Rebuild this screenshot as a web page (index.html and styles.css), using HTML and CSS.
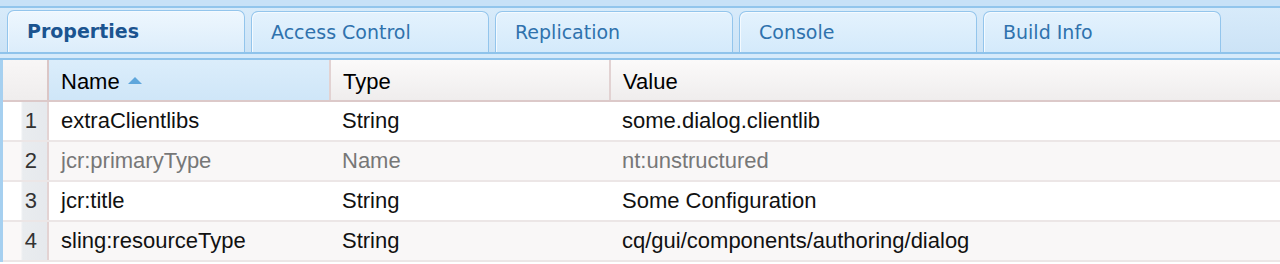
FILE: index.html
```html
<!DOCTYPE html>
<html lang="en">

<head>
    <meta charset="UTF-8">
    <meta name="viewport" content="width=device-width, initial-scale=1.0">
    <title>Properties</title>
    <link rel="stylesheet" href="styles.css">
</head>

<body>

    <div class="panel">

        <div class="tabbar">
            <div class="tab active">Properties</div>
            <div class="tab">Access Control</div>
            <div class="tab">Replication</div>
            <div class="tab">Console</div>
            <div class="tab">Build Info</div>
        </div>
        <div class="tabbar-foot"></div>

        <div class="grid">
            <table>
                <thead>
                    <tr>
                        <th class="num"></th>
                        <th class="col-name sorted">Name <span class="sort-arrow"></span></th>
                        <th class="col-type">Type</th>
                        <th class="col-value">Value</th>
                    </tr>
                </thead>
                <tbody>
                    <tr>
                        <td class="num">1</td>
                        <td>extraClientlibs</td>
                        <td>String</td>
                        <td>some.dialog.clientlib</td>
                    </tr>
                    <tr class="alt protected">
                        <td class="num">2</td>
                        <td>jcr:primaryType</td>
                        <td>Name</td>
                        <td>nt:unstructured</td>
                    </tr>
                    <tr>
                        <td class="num">3</td>
                        <td>jcr:title</td>
                        <td>String</td>
                        <td>Some Configuration</td>
                    </tr>
                    <tr class="alt">
                        <td class="num">4</td>
                        <td>sling:resourceType</td>
                        <td>String</td>
                        <td>cq/gui/components/authoring/dialog</td>
                    </tr>
                </tbody>
            </table>
        </div>

    </div>

</body>

</html>
```

FILE: styles.css
```css
body {
    margin: 0;
    padding: 0;
    background-color: #fff;
    font-family: 'Liberation Sans', Arial, sans-serif;
}

.panel {
    width: 1280px;
    height: 264px;
    overflow: hidden;
}

/* tab strip */
.tabbar {
    display: flex;
    align-items: flex-end;
    gap: 6px;
    height: 46px;
    padding: 0 0 0 7px;
    background: linear-gradient(#d8ebfa, #cce3f6);
    border-top: 6px solid #c7e1f7;
    box-shadow: inset 0 2px 0 #92c5ec;
    border-bottom: 2px solid #8fc3eb;
}

.tabbar-foot {
    height: 4px;
    background: #d6eafa;
    border-bottom: 2px solid #8fc3eb;
}

.tab {
    width: 217px;
    height: 40px;
    padding-left: 19px;
    box-sizing: content-box;
    border: 1px solid #93c5ec;
    border-bottom: none;
    border-radius: 7px 7px 0 0;
    background: linear-gradient(#e4f2fd, #d4eafb);
    box-shadow: inset 1px 1px 0 #f4faff;
    font-family: 'DejaVu Sans', Tahoma, sans-serif;
    font-size: 19px;
    line-height: 41px;
    color: #2f72ad;
}

.tab.active {
    height: 41px;
    background: linear-gradient(#eef7fe, #dcedfb);
    font-weight: bold;
    color: #1b5490;
}

/* property grid */
.grid {
    border-left: 3px solid #a6d0f0;
}

table {
    width: 100%;
    border-collapse: collapse;
    table-layout: fixed;
}

th {
    height: 37px;
    padding: 3px 12px 0;
    text-align: left;
    font-weight: normal;
    font-size: 22px;
    color: #000;
    background: linear-gradient(#fbfafa, #efeded);
    border-bottom: 2px solid #dcc9c9;
    border-left: 2px solid #e2d2d2;
}

th.num {
    width: 44px;
    padding: 0;
    border-left: none;
    border-right: 2px solid #dbc6c6;
    background: linear-gradient(#f8f6f6, #efeded);
}

th.col-name {
    width: 256px;
}

th.col-type {
    width: 254px;
}

th.sorted {
    background: linear-gradient(#dbedfb, #cfe6f8);
    border-left: none;
}

.sort-arrow {
    display: inline-block;
    width: 0;
    height: 0;
    margin-left: 2px;
    vertical-align: 5px;
    border-left: 7px solid transparent;
    border-right: 7px solid transparent;
    border-bottom: 7px solid #5ea6dc;
}

td {
    height: 38px;
    padding: 0 12px;
    font-size: 22px;
    color: #111;
    background: #fff;
    border-bottom: 2px solid #ece6e6;
    white-space: nowrap;
}

td.num {
    padding: 0 10px 0 0;
    text-align: right;
    color: #333;
    background: linear-gradient(90deg, #fff 0, #fff 40%, #e9ecef 45%, #e6e9ed 100%);
    border-right: 2px solid #e3d3d3;
}

tr.alt td {
    background: #f9f7f7;
}

tr.alt td.num {
    background: linear-gradient(90deg, #faf8f8 0, #faf8f8 40%, #e9ecef 45%, #e6e9ed 100%);
}

tr.protected td {
    color: #777;
}

tr.protected td.num {
    color: #333;
}
```
